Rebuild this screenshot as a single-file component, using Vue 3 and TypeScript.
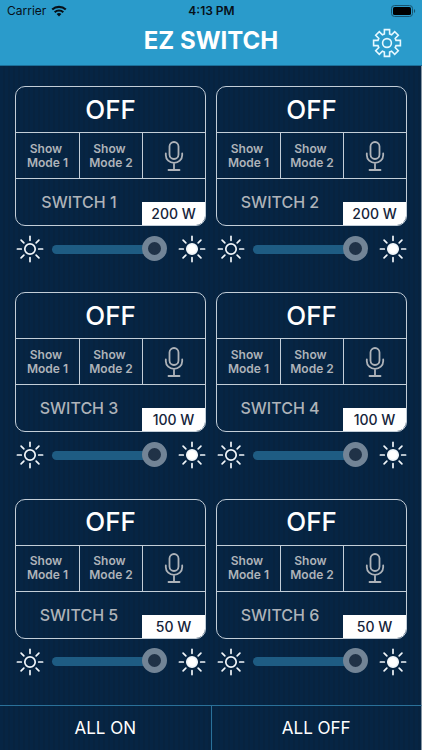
<script setup lang="ts">
import { ref } from 'vue'

interface Switch {
  id: number
  on: boolean
  watts: number
  level: number
}

const switches = ref<Switch[]>(
  [200, 200, 100, 100, 50, 50].map((watts, i) => ({ id: i + 1, on: false, watts, level: 100 })),
)

const rays = [0, 45, 90, 135, 180, 225, 270, 315]

function setAll(on: boolean) {
  switches.value.forEach((s) => (s.on = on))
}
</script>

<template>
  <div class="app">
    <header class="header">
      <div class="status">
        <div class="carrier">
          <span>Carrier</span>
          <svg class="wifi" viewBox="0 0 16 12" aria-hidden="true">
            <path d="M1.2 4.6a9.8 9.8 0 0 1 13.6 0M3.7 7.2a6.2 6.2 0 0 1 8.6 0" fill="none" stroke="#071018" stroke-width="2.1" />
            <path d="M8 11.6 5.6 9.1a3.4 3.4 0 0 1 4.8 0z" fill="#071018" />
          </svg>
        </div>
        <span class="clock">4:13 PM</span>
        <svg class="battery" viewBox="0 0 25 12" aria-hidden="true">
          <rect x="0.5" y="0.5" width="21" height="11" rx="3" fill="none" stroke="#17546f" />
          <rect x="2" y="2" width="18" height="8" rx="1.6" fill="#000" />
          <path d="M23 4v4c1.6-.6 1.6-3.4 0-4z" fill="#17546f" />
        </svg>
      </div>
      <div class="titlebar">
        <h1>EZ SWITCH</h1>
        <button class="settings" type="button" aria-label="Settings">
          <svg viewBox="-15 -15 30 30" aria-hidden="true">
            <path
              d="M-2.6-13.4H2.6V-9L4.6-8.2 7.7-11.3 11.3-7.7 8.2-4.6 9-2.6H13.4V2.6H9L8.2 4.6 11.3 7.7 7.7 11.3 4.6 8.2 2.6 9V13.4H-2.6V9L-4.6 8.2-7.7 11.3-11.3 7.7-8.2 4.6-9 2.6H-13.4V-2.6H-9L-8.2-4.6-11.3-7.7-7.7-11.3-4.6-8.2-2.6-9Z"
            />
            <circle r="4.4" />
          </svg>
        </button>
      </div>
    </header>

    <main class="grid">
      <section v-for="s in switches" :key="s.id" class="unit">
        <div class="card">
          <button class="power" type="button" @click="s.on = !s.on">{{ s.on ? 'ON' : 'OFF' }}</button>
          <button v-for="m in 2" :key="m" class="mode" type="button">Show&nbsp;<br />Mode {{ m }}</button>
          <button class="mode" type="button" aria-label="Voice control">
            <svg class="mic" viewBox="0 0 20 32" aria-hidden="true">
              <rect x="5.5" y="2" width="9" height="17" rx="4.5" />
              <path d="M1.8 13.5v1.8a8.2 7.6 0 0 0 16.4 0v-1.8M10 23v6.5M4.5 30h11" />
            </svg>
          </button>
          <h2 class="name">SWITCH {{ s.id }}</h2>
          <span class="watts">{{ s.watts }} W</span>
        </div>
        <div class="dimmer">
          <svg class="sun" viewBox="-14 -14 28 28" aria-hidden="true">
            <circle r="5.2" />
            <path v-for="a in rays" :key="a" d="M0-8.7V-12.6" :transform="`rotate(${a})`" />
          </svg>
          <input v-model.number="s.level" type="range" min="0" max="100" :aria-label="`Brightness of switch ${s.id}`" />
          <svg class="sun full" viewBox="-14 -14 28 28" aria-hidden="true">
            <circle r="5.2" />
            <path v-for="a in rays" :key="a" d="M0-8.7V-12.6" :transform="`rotate(${a})`" />
          </svg>
        </div>
      </section>
    </main>

    <footer class="footer">
      <button type="button" @click="setAll(true)">ALL ON</button>
      <button type="button" @click="setAll(false)">ALL OFF</button>
    </footer>
  </div>
</template>

<style>
body {
  margin: 0;
  background: #062443;
}
</style>

<style scoped>
.app {
  box-sizing: border-box;
  min-height: 100vh;
  display: flex;
  flex-direction: column;
  font-family: Inter, 'Liberation Sans', sans-serif;
  color: #fff;
  background: repeating-linear-gradient(90deg, #062544 0 3px, #07233f 3px 5px);
}

button {
  margin: 0;
  padding: 0;
  border: 0;
  background: none;
  color: inherit;
  font: inherit;
  cursor: pointer;
}

.header {
  height: 66px;
  background: #2a9bcb;
  border-bottom: 1px solid #1c6f99;
  box-sizing: border-box;
}

.status {
  display: grid;
  grid-template-columns: 1fr auto 1fr;
  align-items: center;
  height: 21px;
  padding: 0 6px 0 7px;
  font-size: 12px;
  color: #071018;
}

.carrier {
  display: flex;
  align-items: center;
  gap: 5px;
}

.wifi {
  width: 16px;
  height: 12px;
}

.clock {
  font-weight: 600;
}

.battery {
  width: 25px;
  height: 12px;
  justify-self: end;
}

.titlebar {
  display: grid;
  grid-template-columns: 1fr auto 1fr;
  align-items: start;
  padding: 0 20px;
}

h1 {
  grid-column: 2;
  margin: 0;
  font-size: 24px;
  line-height: 39px;
  font-weight: 700;
}

.settings {
  justify-self: end;
  width: 30px;
  height: 30px;
  margin-top: 7px;
}

.settings svg {
  display: block;
  fill: none;
  stroke: #e6f8ff;
  stroke-width: 1.6;
}

.grid {
  flex: 1;
  display: grid;
  grid-template-columns: repeat(2, minmax(0, 1fr));
  grid-auto-rows: 1fr;
  column-gap: 10px;
  padding: 20px 14px 0 15px;
  border-right: 1px solid #8394a2;
}

.card {
  display: grid;
  grid-template-columns: repeat(3, minmax(0, 1fr));
  grid-template-rows: 45px 47px 46px;
  border: 1px solid #c3ced8;
  border-radius: 10px;
  overflow: hidden;
}

.power {
  grid-column: 1 / -1;
  font-size: 26px;
  line-height: 44px;
  font-weight: 500;
}

.mode {
  display: block;
  border-top: 1px solid #c3ced8;
  border-bottom: 1px solid #c3ced8;
  color: #aeb3b9;
  font-size: 12px;
  line-height: 14px;
  font-weight: 600;
}

.mode + .mode {
  border-left: 1px solid #c3ced8;
}

.mic {
  display: block;
  width: 20px;
  height: 32px;
  margin: 0 auto;
  fill: none;
  stroke: #aeb3b9;
  stroke-width: 1.8;
  stroke-linecap: round;
}

.name {
  grid-column: span 2;
  align-self: center;
  margin: 0;
  text-align: center;
  color: #aeb3b9;
  font-size: 16px;
  font-weight: 500;
}

.watts {
  align-self: end;
  background: #fff;
  color: #14233a;
  text-align: center;
  font-size: 14px;
  line-height: 23px;
  font-weight: 500;
}

.dimmer {
  display: flex;
  align-items: center;
  height: 46px;
  padding-left: 1px;
}

.sun {
  flex: none;
  width: 28px;
  height: 28px;
  fill: none;
  stroke: #f1f6fa;
  stroke-width: 1.7;
  stroke-linecap: round;
}

.sun.full circle {
  fill: #fff;
}

input[type='range'] {
  appearance: none;
  flex: 1;
  width: 0;
  min-width: 0;
  height: 26px;
  margin: 0 11px 0 8px;
  background: none;
}

input[type='range']::-webkit-slider-runnable-track {
  height: 9px;
  border-radius: 5px;
  background: linear-gradient(90deg, #1e5c83 90%, transparent 90%);
}

input[type='range']::-webkit-slider-thumb {
  appearance: none;
  box-sizing: border-box;
  width: 25px;
  height: 25px;
  margin-top: -9px;
  border: 6px solid #728496;
  border-radius: 50%;
  background: #203247;
}

.footer {
  display: grid;
  grid-template-columns: 1fr 1fr;
  height: 45px;
  border-top: 1px solid #2a7199;
  border-right: 1px solid #8394a2;
  box-sizing: border-box;
}

.footer button {
  font-size: 17px;
}

.footer button + button {
  border-left: 1px solid #2a7199;
}
</style>
